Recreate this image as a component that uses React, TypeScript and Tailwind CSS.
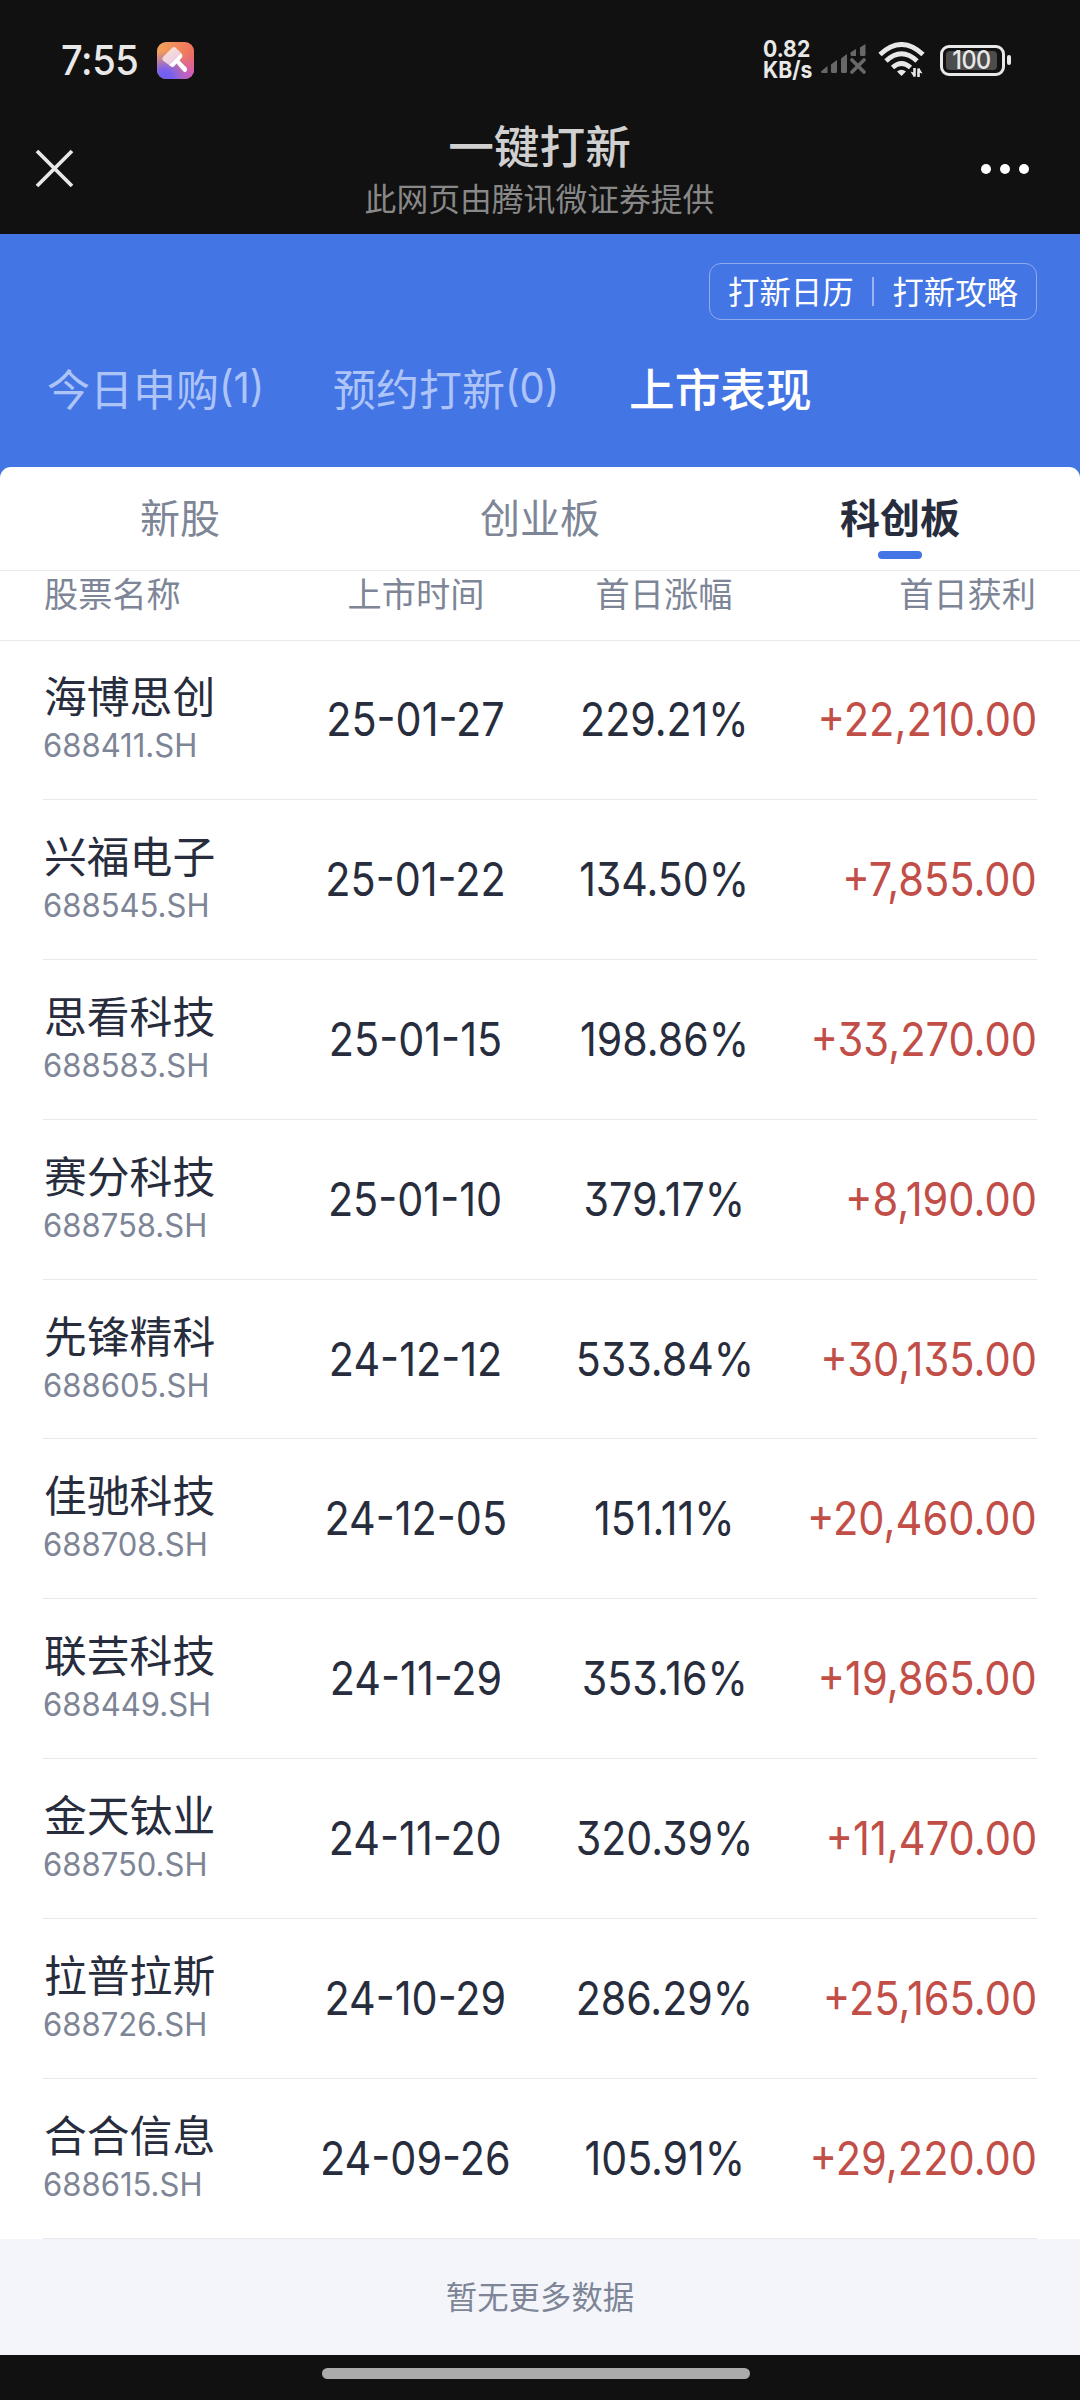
import clsx from "clsx";

type Stock = {
    name: string;
    code: string;
    date: string;
    rate: string;
    profit: string;
};

const STOCKS: Stock[] = [
    { name: "海博思创", code: "688411.SH", date: "25-01-27", rate: "229.21%", profit: "+22,210.00" },
    { name: "兴福电子", code: "688545.SH", date: "25-01-22", rate: "134.50%", profit: "+7,855.00" },
    { name: "思看科技", code: "688583.SH", date: "25-01-15", rate: "198.86%", profit: "+33,270.00" },
    { name: "赛分科技", code: "688758.SH", date: "25-01-10", rate: "379.17%", profit: "+8,190.00" },
    { name: "先锋精科", code: "688605.SH", date: "24-12-12", rate: "533.84%", profit: "+30,135.00" },
    { name: "佳驰科技", code: "688708.SH", date: "24-12-05", rate: "151.11%", profit: "+20,460.00" },
    { name: "联芸科技", code: "688449.SH", date: "24-11-29", rate: "353.16%", profit: "+19,865.00" },
    { name: "金天钛业", code: "688750.SH", date: "24-11-20", rate: "320.39%", profit: "+11,470.00" },
    { name: "拉普拉斯", code: "688726.SH", date: "24-10-29", rate: "286.29%", profit: "+25,165.00" },
    { name: "合合信息", code: "688615.SH", date: "24-09-26", rate: "105.91%", profit: "+29,220.00" },
];

const BOARDS = ["新股", "创业板", "科创板"];

function SignalIcon() {
    return (
        <svg width="46" height="32" viewBox="0 0 46 32" fill="#686868">
            <path d="M1 27.5 7.5 22V29H2.5Q1 29 1 27.5ZM11 20.5 17 16V27.5Q17 29 15.500 29H12.500Q11 29 11 27.500ZM21 14.500 27 10V27.500Q27 29 25.500 29H22.500Q21 29 21 27.500ZM30.500 8.500 36 5V12H32Q30.500 12 30.500 10.500ZM40 3.500 45.500 0V10.500Q45.500 12 44 12H41.500Q40 12 40 10.500Z" />
            <path d="m32 16 12 12M44 16 32 28" stroke="#686868" strokeWidth="3.600" strokeLinecap="round" />
        </svg>
    );
}

function WifiIcon() {
    return (
        <svg width="48" height="36" viewBox="0 0 48 36" fill="none" stroke="#e8e8e8" strokeWidth="4.800">
            <path d="M2 12.500Q23.500-7.500 45 12.500M8 19Q23.500 4.500 39 19M14.500 25.500Q23.500 17.500 32.500 25.500" />
            <path d="M19 29.500Q23.500 26 28 29.500L23.500 34Z" fill="#e8e8e8" stroke="none" />
            <path d="M36.500 26V34.500M40.500 35V26.500" strokeWidth="2.600" />
            <path d="M32.500 29.500 35.500 34.500H37V31ZM44.500 31.500 41.500 26.500H40.500V30.500Z" fill="#e8e8e8" stroke="none" />
        </svg>
    );
}

function Battery() {
    return (
        <div className="flex items-center gap-[2px]">
            <div className="h-[31px] w-[65px] rounded-[9px] border-[3px] border-[#e8e8e8] p-[3px]">
                <div className="flex h-full w-[51px] items-center justify-center rounded-[4px] bg-[#4c4c4c]">
                    <span className="scale-x-[0.9] font-['Inter'] text-[26px] leading-none font-medium tracking-[-0.5px] text-[#e8e8e8]">
                        100
                    </span>
                </div>
            </div>
            <div className="h-[10px] w-[4px] rounded-[2px] bg-[#e8e8e8]" />
        </div>
    );
}

function BrushIcon() {
    return (
        <svg width="37" height="37" viewBox="0 0 37 37">
            <defs>
                <linearGradient id="brush-bg" x1="0" y1="0" x2="1" y2="0.25">
                    <stop offset="0" stopColor="#f2a75c" />
                    <stop offset="1" stopColor="#ee6f5c" />
                </linearGradient>
                <radialGradient id="brush-violet" cx="0.2" cy="1" r="0.75">
                    <stop offset="0" stopColor="#6a5cf0" />
                    <stop offset="0.35" stopColor="#7d62ee" />
                    <stop offset="1" stopColor="#8a62e6" stopOpacity="0" />
                </radialGradient>
                <radialGradient id="brush-pink" cx="0.95" cy="0.95" r="0.7">
                    <stop offset="0" stopColor="#cc58d2" />
                    <stop offset="1" stopColor="#dc5fb0" stopOpacity="0" />
                </radialGradient>
                <linearGradient id="brush-head" x1="0.2" y1="0" x2="0.8" y2="1">
                    <stop offset="0" stopColor="#fbe3cf" />
                    <stop offset="1" stopColor="#e4c8ea" />
                </linearGradient>
            </defs>
            <rect width="37" height="37" rx="9" fill="url(#brush-bg)" />
            <rect width="37" height="37" rx="9" fill="url(#brush-pink)" />
            <rect width="37" height="37" rx="9" fill="url(#brush-violet)" />
            <path d="M6 15 15.500 5.500Q17 4.500 18.500 5.500L24 11 12 23 6 18.500Q4.500 17 6 15Z" fill="url(#brush-head)" />
            <path d="M24 11Q26.500 13.500 24.500 16L22.500 18.500 29.500 25.500Q31 28.500 28.500 30Q27 30.500 26 29L19.500 21.500 17 24.500Q15 26 12 23Z" fill="#fff" />
        </svg>
    );
}

function StatusBar() {
    return (
        <div className="flex h-[120px] items-center justify-between pr-[69px] pl-[61px] text-[#e8e8e8]">
            <div className="flex items-center">
                <span className="w-[96px] origin-left scale-x-[0.93] font-['Inter'] text-[41px] leading-none font-medium tracking-[-0.5px]">
                    7:55
                </span>
                <BrushIcon />
            </div>
            <div className="flex items-center">
                <p className="w-[57px] origin-left scale-x-[0.92] font-['Inter'] text-[23px] leading-[21px] font-bold">
                    0.82
                    <br />
                    KB/s
                </p>
                <SignalIcon />
                <div className="mr-[14px] ml-[12px]">
                    <WifiIcon />
                </div>
                <Battery />
            </div>
        </div>
    );
}

function TitleBar() {
    return (
        <div className="flex h-[114px] items-start justify-between pr-[51px] pl-[35px]">
            <svg className="mt-[29px]" width="40" height="40" viewBox="0 0 40 40" stroke="#e8e8e8" strokeWidth="3.800">
                <path d="m2 2 35 35M37 2 2 37" />
            </svg>
            <div className="flex flex-col items-center pl-[23px]">
                <h1 className="text-[45.700px] leading-[48px] font-medium text-[#d0d0d0]">一键打新</h1>
                <p className="text-[31.800px] leading-[58px] text-[#888888]">此网页由腾讯微证券提供</p>
            </div>
            <div className="mt-[44px] flex gap-[9px]">
                <i className="size-[10px] rounded-full bg-white" />
                <i className="size-[10px] rounded-full bg-white" />
                <i className="size-[10px] rounded-full bg-white" />
            </div>
        </div>
    );
}

function Hero() {
    return (
        <div className="h-[243px] bg-[#4475e4] pt-[29px]">
            <div className="flex justify-end pr-[43px]">
                <div className="flex h-[57px] w-[328px] items-center justify-between rounded-[12px] border border-[#8fabee] px-[18px] pb-[1px] text-[31.400px] leading-none text-white">
                    <span>打新日历</span>
                    <i className="h-[29px] w-[2px] bg-[#9bb5f1]" />
                    <span>打新攻略</span>
                </div>
            </div>
            <div className="mt-[37px] flex h-[60px] items-center pl-[47px] leading-[60px] text-[#adc4f8]">
                <TopTab label="今日申购" count="(1)" className="w-[286px]" />
                <TopTab label="预约打新" count="(0)" className="w-[296px]" />
                <span className="text-[45.700px] font-medium text-white">上市表现</span>
            </div>
        </div>
    );
}

function TopTab({ label, count, className }: { label: string; count: string; className: string }) {
    return (
        <div className={clsx("flex", className)}>
            <span className="text-[43px]">{label}</span>
            <span className="origin-left scale-x-[0.93] font-['Inter'] text-[43px]">{count}</span>
        </div>
    );
}

function BoardTabs() {
    return (
        <div className="flex h-[104px] border-b border-[#e9e9ec] text-[40px] leading-[98px]">
            {BOARDS.map((board) => {
                const active = board === "科创板";
                return (
                    <div
                        key={board}
                        className={clsx(
                            "relative flex-1 text-center",
                            active ? "font-bold text-[#282d3e]" : "text-[#7d8596]"
                        )}
                    >
                        {board}
                        {active && (
                            <i className="absolute bottom-[11px] left-[158px] h-[8px] w-[44px] rounded-full bg-[#4475e4]" />
                        )}
                    </div>
                );
            })}
        </div>
    );
}

function StockRow({ stock }: { stock: Stock }) {
    return (
        <div className="mx-[43px] flex h-[159.9px] items-center border-b border-[#e9e9ec] font-['Inter','Noto_Sans_CJK_SC',sans-serif] text-[47px] leading-none text-[#282d3e] [font-feature-settings:'cv09']">
            <div className="w-[250px] shrink-0">
                <p className="pl-[1px] text-[42.800px] leading-[52px]">{stock.name}</p>
                <p className="origin-left scale-x-[0.97] text-[32px] leading-[43px] text-[#7d8596]">
                    {stock.code}
                </p>
            </div>
            <div className="flex w-[245px] shrink-0 justify-center pb-[2px]">
                <span className="scale-x-[0.88]">{stock.date}</span>
            </div>
            <div className="flex w-[253px] shrink-0 justify-center pb-[2px]">
                <span className="scale-x-[0.875]">{stock.rate}</span>
            </div>
            <div className="flex min-w-0 flex-1 justify-end pb-[2px] text-[#c24e48]">
                <span className="origin-right scale-x-[0.885]">{stock.profit}</span>
            </div>
        </div>
    );
}

export default function App() {
    return (
        <div className="flex h-[2400px] w-[1080px] flex-col overflow-hidden bg-[#111111] font-['Noto_Sans_CJK_SC',sans-serif] whitespace-nowrap">
            <StatusBar />
            <TitleBar />
            <Hero />
            <div className="-mt-[10px] h-[1772px] rounded-t-[11px] bg-white">
                <BoardTabs />
                <div className="flex h-[70px] border-b border-[#e9e9ec] px-[43px] text-[34.200px] leading-[42px] text-[#7d8596]">
                    <span className="w-[250px] pl-[1px]">股票名称</span>
                    <span className="w-[246px] text-center">上市时间</span>
                    <span className="w-[250px] text-center">首日涨幅</span>
                    <span className="flex-1 pr-[1px] text-right">首日获利</span>
                </div>
                <div className="-mt-px">
                    {STOCKS.map((stock) => (
                        <StockRow key={stock.code} stock={stock} />
                    ))}
                </div>
            </div>
            <div className="h-[116px] bg-[#f4f5fa] text-center text-[31.400px] leading-[114px] text-[#7d8596]">
                暂无更多数据
            </div>
            <div className="flex h-[45px] justify-center pt-[13px]">
                <div className="h-[11px] w-[428px] -translate-x-[4px] rounded-full bg-[#ababab]" />
            </div>
        </div>
    );
}
